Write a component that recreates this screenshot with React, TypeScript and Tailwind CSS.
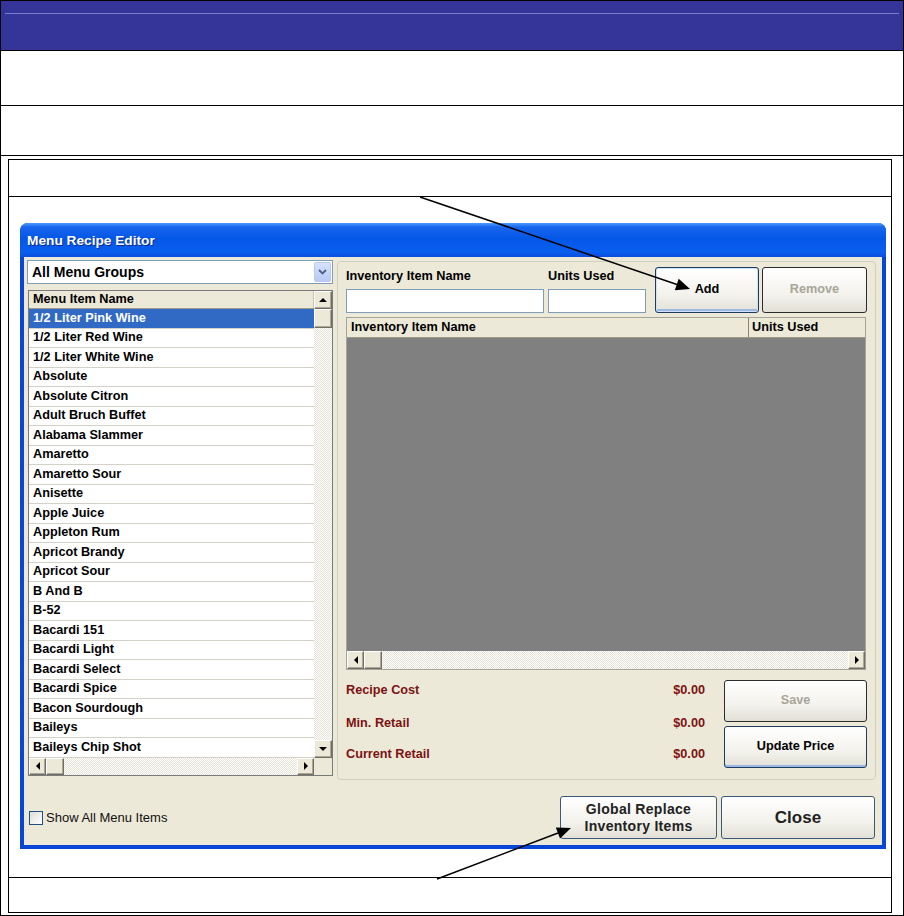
import React from 'react';

const menuItems = [
  '1/2 Liter Pink Wine',
  '1/2 Liter Red Wine',
  '1/2 Liter White Wine',
  'Absolute',
  'Absolute Citron',
  'Adult Bruch Buffet',
  'Alabama Slammer',
  'Amaretto',
  'Amaretto Sour',
  'Anisette',
  'Apple Juice',
  'Appleton Rum',
  'Apricot Brandy',
  'Apricot Sour',
  'B And B',
  'B-52',
  'Bacardi 151',
  'Bacardi Light',
  'Bacardi Select',
  'Bacardi Spice',
  'Bacon Sourdough',
  'Baileys',
  'Baileys Chip Shot',
];

const track =
  'bg-[conic-gradient(#ffffff_25%,#e6e3d6_0_50%,#ffffff_0_75%,#e6e3d6_0)] bg-[length:2px_2px]';

// classic 3D scroll button
const ScrollBtn = ({ dir, className = '' }: { dir?: 'up' | 'down' | 'left' | 'right'; className?: string }) => (
  <div
    className={`flex items-center justify-center bg-[#ece9d8] border border-t-white border-l-white border-r-[#716f64] border-b-[#716f64] shadow-[inset_-1px_-1px_0_#aca899] ${className}`}
  >
    {dir === 'up' && <div className="w-0 h-0 border-x-[4px] border-x-transparent border-b-[4px] border-b-black" />}
    {dir === 'down' && <div className="w-0 h-0 border-x-[4px] border-x-transparent border-t-[4px] border-t-black" />}
    {dir === 'left' && <div className="w-0 h-0 border-y-[4px] border-y-transparent border-r-[4px] border-r-black" />}
    {dir === 'right' && <div className="w-0 h-0 border-y-[4px] border-y-transparent border-l-[4px] border-l-black" />}
  </div>
);

const btnBase =
  'flex items-center justify-center rounded-[3px] border bg-[linear-gradient(to_bottom,#ffffff,#f3f2ec_60%,#e2e0d6)] font-bold';

export default function App() {
  return (
    <div className="relative w-[904px] h-[916px] bg-white font-['Liberation_Sans',Arial,sans-serif] text-black">
      <div className="flex h-full flex-col border border-black">
        {/* document header bar */}
        <div className="h-[50px] bg-[#343499] border-b border-black pt-[12px] px-[4px]">
          <div className="h-px bg-[#7b7bd0]" />
        </div>
        <div className="h-[55px] border-b border-black" />
        <div className="h-[50px] border-b border-black" />

        <div className="flex-1 pl-[7px] pr-[11px] pt-[3px] pb-[2px]">
          <div className="flex h-full flex-col border border-black">
            <div className="h-[37px] border-b border-black" />
            <div className="flex-1 border-b border-black pl-[11px] pt-[26px]">
              {/* XP window */}
              <div className="flex h-[626px] w-[866px] flex-col overflow-hidden rounded-t-[8px] bg-[#0846d8]">
                <div className="flex h-[34px] items-center pl-[7px] pt-[2px] bg-[linear-gradient(to_bottom,#4b9bff_0%,#1a66ee_12%,#0457e6_45%,#0a5ef0_85%,#0a4fdc_100%)] text-[13.7px] font-bold text-white [text-shadow:1px_1px_0_#0a2a8a]">
                  Menu Recipe Editor
                </div>
                <div className="mx-[4px] mb-[4px] flex flex-1 flex-col bg-[#ece9d8]">
                  <div className="flex gap-[4px] pl-[3px] pt-[3px]">
                    {/* left panel */}
                    <div className="flex w-[306px] flex-col">
                      <div className="flex h-[24px] items-center border border-[#7f9db9] bg-white pl-[4px] pr-[1px]">
                        <span className="flex-1 text-[14px] font-bold">All Menu Groups</span>
                        <div className="flex h-[20px] w-[17px] items-center justify-center rounded-[2px] border border-[#b9c9ef] bg-[linear-gradient(to_bottom,#d6e2fd,#b6caf6)]">
                          <svg width="9" height="6" viewBox="0 0 9 6">
                            <path d="M1 1 L4.5 4.5 L8 1" fill="none" stroke="#4d6185" strokeWidth="1.8" />
                          </svg>
                        </div>
                      </div>

                      <div className="mt-[6px] ml-[1px] flex flex-col border border-[#7a7a7a] bg-white">
                        <div className="flex">
                          <div className="flex flex-1 flex-col">
                            <div className="flex h-[18px] items-center border-b border-[#9d9a8c] bg-[#ece9d8] pl-[4px] text-[12.7px] font-bold border-r border-r-[#c5c2b2]">
                              Menu Item Name
                            </div>
                            {menuItems.map((item, i) => (
                              <div
                                key={item}
                                className={`flex h-[19.5px] items-center border-b border-[#d4d2c8] pl-[4px] text-[12.7px] font-bold ${
                                  i === 0 ? 'bg-[#316ac5] text-white' : ''
                                }`}
                              >
                                {item}
                              </div>
                            ))}
                          </div>
                          <div className="flex w-[18px] flex-col">
                            <ScrollBtn dir="up" className="h-[18px]" />
                            <ScrollBtn className="h-[19px]" />
                            <div className={`flex-1 ${track}`} />
                            <ScrollBtn dir="down" className="h-[18px]" />
                          </div>
                        </div>
                        <div className="flex h-[17px]">
                          <div className={`flex flex-1 ${track}`}>
                            <ScrollBtn dir="left" className="w-[17px]" />
                            <ScrollBtn className="w-[18px]" />
                            <div className="flex-1" />
                            <ScrollBtn dir="right" className="w-[17px]" />
                          </div>
                          <div className="w-[18px] bg-[#ece9d8]" />
                        </div>
                      </div>
                    </div>

                    {/* right group box */}
                    <div className="mt-[1px] flex h-[519px] w-[539px] flex-col rounded-[4px] border border-[#d0d0bf] pl-[8px] pt-[5px]">
                      <div className="flex">
                        <div className="flex flex-col">
                          <div className="h-[18px] text-[12.7px] font-bold leading-[18px]">Inventory Item Name</div>
                          <div className="mt-[4px] h-[24px] w-[198px] border border-[#7f9db9] bg-white" />
                        </div>
                        <div className="ml-[4px] flex flex-col">
                          <div className="h-[18px] text-[12.7px] font-bold leading-[18px]">Units Used</div>
                          <div className="mt-[4px] h-[24px] w-[98px] border border-[#7f9db9] bg-white" />
                        </div>
                        <div
                          className={`${btnBase} ml-[9px] h-[46px] w-[104px] border-[#1d3b5c] text-[12.7px] shadow-[inset_0_0_0_1px_#cfe0f8,inset_0_-2px_0_1px_#9bb8e6]`}
                        >
                          Add
                        </div>
                        <div className={`${btnBase} ml-[3px] h-[46px] w-[105px] border-[#2c2c2c] text-[12.7px] text-[#a8a698]`}>
                          Remove
                        </div>
                      </div>

                      {/* recipe grid */}
                      <div className="mt-[4px] flex h-[353px] w-[520px] flex-col border border-[#a5a39a]">
                        <div className="flex h-[20px] bg-[#ece9d8] text-[12.7px] font-bold border-b border-[#9d9a8c]">
                          <div className="flex w-[402px] items-center border-r border-[#8a8778] pl-[4px]">Inventory Item Name</div>
                          <div className="flex flex-1 items-center pl-[3px]">Units Used</div>
                        </div>
                        <div className="flex-1 bg-[#808080]" />
                        <div className={`flex h-[18px] ${track}`}>
                          <ScrollBtn dir="left" className="w-[17px]" />
                          <ScrollBtn className="w-[18px]" />
                          <div className="flex-1" />
                          <ScrollBtn dir="right" className="w-[17px]" />
                        </div>
                      </div>

                      <div className="flex">
                        <div className="flex w-[359px] flex-col text-[12.7px] font-bold text-[#7d1212]">
                          <div className="mt-[12px] flex h-[18px] items-center justify-between">
                            <span>Recipe Cost</span>
                            <span>$0.00</span>
                          </div>
                          <div className="mt-[15px] flex h-[18px] items-center justify-between">
                            <span>Min. Retail</span>
                            <span>$0.00</span>
                          </div>
                          <div className="mt-[13px] flex h-[18px] items-center justify-between">
                            <span>Current Retail</span>
                            <span>$0.00</span>
                          </div>
                        </div>
                        <div className="ml-[19px] mt-[10px] flex flex-col gap-[4px]">
                          <div className={`${btnBase} h-[42px] w-[143px] border-[#2c2c2c] text-[12.7px] text-[#a8a698]`}>Save</div>
                          <div
                            className={`${btnBase} h-[42px] w-[143px] border-[#1d3b5c] text-[12.7px] shadow-[inset_0_-2px_0_0_#9bb8e6]`}
                          >
                            Update Price
                          </div>
                        </div>
                      </div>
                    </div>
                  </div>

                  {/* bottom bar */}
                  <div className="flex items-center pt-[16px] pb-[5px] pl-[5px] pr-[7px]">
                    <div className="h-[14px] w-[14px] border border-[#1c5180] bg-[linear-gradient(135deg,#dcdcd7,#ffffff)]" />
                    <span className="ml-[3px] text-[13px] text-[#111]">Show All Menu Items</span>
                    <div
                      className={`${btnBase} ml-auto h-[43px] w-[157px] flex-col border-[#3b5a7a] text-[14px] leading-[17px] tracking-[0.3px] text-[#222]`}
                    >
                      <span>Global Replace</span>
                      <span>Inventory Items</span>
                    </div>
                    <div className={`${btnBase} ml-[4px] h-[43px] w-[154px] border-[#3b5a7a] text-[17px] text-[#222]`}>
                      Close
                    </div>
                  </div>
                </div>
              </div>
            </div>
            <div className="h-[34px]" />
          </div>
        </div>
      </div>

      {/* callout arrows */}
      <svg className="pointer-events-none absolute inset-0" width="904" height="916" viewBox="0 0 904 916">
        <line x1="420" y1="197" x2="677" y2="284.5" stroke="black" strokeWidth="1.5" />
        <polygon points="690,289 674.8,290.2 678.7,278.8" fill="black" />
        <line x1="437" y1="879" x2="558" y2="833" stroke="black" strokeWidth="1.5" />
        <polygon points="571,828 560,838.6 555.8,827.4" fill="black" />
      </svg>
    </div>
  );
}
